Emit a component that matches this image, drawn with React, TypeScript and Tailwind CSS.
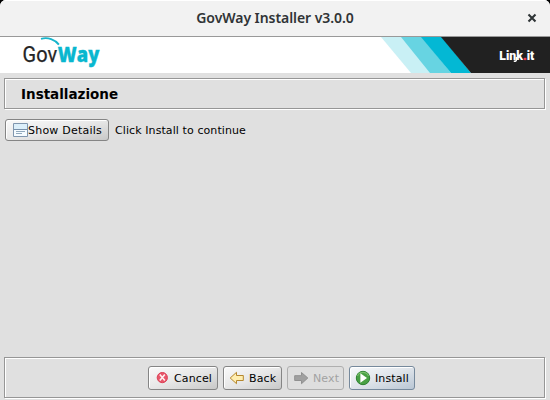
import type { ReactNode } from "react";

const etched =
  "border border-[#969696] shadow-[inset_1px_1px_0_#fff,1px_1px_0_#fff]";

function GovWayLogo() {
  return (
    <svg className="ml-[20px] h-[36px] w-[90px]" viewBox="20 37 90 36">
      <path d="M41 38.8 C48 36.8 55 39.5 58.9 44.6" fill="none" stroke="#18b5cb" strokeWidth="1.9" />
      <text x="22.6" y="62.3" fontSize="21.5" fontFamily="'Roboto', sans-serif" fill="#252525" stroke="#252525" strokeWidth=".25" textLength="34.5" lengthAdjust="spacingAndGlyphs">Gov</text>
      <text x="57.8" y="62" fontSize="21.5" fontFamily="'Open Sans', sans-serif" fontWeight="800" fill="#09b7cf" stroke="#09b7cf" strokeWidth=".4" textLength="41.5" lengthAdjust="spacingAndGlyphs">Way</text>
    </svg>
  );
}

function BannerArt() {
  return (
    <svg className="h-[36px] w-[170px]" viewBox="380 37 170 36">
      <path d="M381 37h21l29 36h-20z" fill="#c9f0f5" />
      <path d="M401 37h21l29 36h-21z" fill="#67d4e2" />
      <path d="M421 37h21l29 36h-20z" fill="#03b8d4" />
      <path d="M441 37h109v36h-79z" fill="#212121" />
      <text x="499.3" y="59.5" fontFamily="'Roboto', sans-serif" fontWeight="900" fontSize="12.5" fill="#fff" textLength="35" lengthAdjust="spacingAndGlyphs">
        Link<tspan fill="#ff4058" stroke="#ff4058" strokeWidth=".4">.</tspan>it
      </text>
      <path d="M516.4 57v2.8q0 1.7-2.6 1.5" fill="none" stroke="#fff" strokeWidth="1.5" />
    </svg>
  );
}

function DetailsIcon() {
  return (
    <svg className="h-[16px] w-[15px] shrink-0" viewBox="0 0 15 16">
      <path d="M.5 1.5h14v13H.5z" fill="#f5fbff" stroke="#8096ae" />
      <path d="M1 2h13v5H1z" fill="#dceffa" />
      <path d="M1 7.5h13" stroke="#7890aa" />
      <path d="M3 9.5h9M3 11.5h6" stroke="#91a9bd" />
    </svg>
  );
}

function CancelIcon() {
  return (
    <svg className="h-[16px] w-[16px] shrink-0" viewBox="0 0 16 16">
      <circle cx="8.3" cy="7.6" r="5.1" fill="#e8566a" stroke="#dc3f55" />
      <path d="m5.8 4.6 5 6M10.8 4.6l-5 6" stroke="#fff0f1" strokeWidth="1.6" />
    </svg>
  );
}

function BackIcon() {
  return (
    <svg className="h-[16px] w-[16px] shrink-0" viewBox="0 0 16 16">
      <path d="M1.2 8 7.5 2.3v3.2h6.8v5H7.5v3.2z" fill="#ffeeb0" stroke="#b5872f" strokeLinejoin="round" />
    </svg>
  );
}

function NextIcon() {
  return (
    <svg className="h-[16px] w-[16px] shrink-0" viewBox="0 0 16 16">
      <path d="M14.8 8 8.5 2.5v3.2H1.7v4.8h6.8v3.2z" fill="#a0a0a0" stroke="#909090" strokeLinejoin="round" />
    </svg>
  );
}

function InstallIcon() {
  return (
    <svg className="h-[16px] w-[16px] shrink-0" viewBox="0 0 16 16">
      <circle cx="8" cy="8" r="6.7" fill="#48a044" stroke="#2d8032" />
      <path d="M2.5 6a6 6 0 0 1 11 0" fill="none" stroke="#78bd6b" strokeWidth="1.2" />
      <path d="m5.4 3.3 6.6 4.7-6.6 4.7z" fill="#fff" />
    </svg>
  );
}

interface ActionProps {
  icon: ReactNode;
  label: string;
  size: string;
  tone: string;
  disabled?: boolean;
}

function Action({ icon, label, size, tone, disabled }: ActionProps) {
  return (
    <button
      disabled={disabled}
      className={`flex h-[24px] shrink-0 items-center gap-[4px] rounded-[3px] border pl-[5px] ${size} ${tone}`}
    >
      {icon}
      <span className="pt-[2px] leading-none tracking-[0.12px] whitespace-nowrap">{label}</span>
    </button>
  );
}

const normalTone =
  "border-[#858585] bg-linear-to-br from-[#fafafa] via-[#e7e7e7] to-[#c8c8c8] shadow-[inset_1px_1px_0_#fff]";

export default function App() {
  return (
    <div className="h-[400px] w-[550px] overflow-hidden bg-black font-['DejaVu_Sans',sans-serif] text-[11px] text-black">
      <div className="flex h-full flex-col overflow-hidden rounded-t-[6px] bg-[#e0e0e0]">
        <header className="flex h-[37px] shrink-0 items-center border-b border-[#999] bg-[#f2f2f2] pl-[23px] shadow-[inset_0_1px_0_#fff]">
          <h1 className="flex-1 text-center font-['Noto_Sans','Open_Sans',sans-serif] text-[14px] leading-none font-semibold tracking-[-0.06px] text-[#303436]">
            GovWay Installer v3.0.0
          </h1>
          <button className="mr-[13px] flex size-[10px] items-center justify-center" aria-label="Close">
            <svg className="size-[10px]" viewBox="0 0 10 10">
              <path d="m1.5 1.5 7 7m0-7-7 7" stroke="#2e3436" strokeWidth="2.1" />
            </svg>
          </button>
        </header>

        <div className="flex h-[36px] shrink-0 justify-between bg-white">
          <GovWayLogo />
          <BannerArt />
        </div>

        <section className={`mt-[5px] mr-[5px] ml-[4px] flex h-[31px] shrink-0 items-center pl-[16px] ${etched}`}>
          <h2 className="pt-[2px] text-[13.5px] leading-none font-bold">Installazione</h2>
        </section>

        <main className="flex flex-1 items-start pt-[10px] pl-[5px]">
          <button className={`flex h-[22px] w-[104px] shrink-0 items-center rounded-[3px] border pl-[7px] ${normalTone}`}>
            <DetailsIcon />
            <span className="leading-none tracking-[0.22px] whitespace-nowrap">Show Details</span>
          </button>
          <p className="ml-[6px] pt-[1px] leading-[22px] tracking-[0.09px]">Click Install to continue</p>
        </main>

        <footer className={`mr-[5px] mb-[2px] ml-[4px] flex h-[41px] shrink-0 items-center gap-[5px] pl-[143px] ${etched}`}>
          <Action icon={<CancelIcon />} label="Cancel" size="w-[70px]" tone={normalTone} />
          <Action icon={<BackIcon />} label="Back" size="w-[59px]" tone={normalTone} />
          <Action
            icon={<NextIcon />}
            label="Next"
            size="w-[57px]"
            tone="border-[#afafaf] bg-[#dedede] text-[#a2a2a2]"
            disabled
          />
          <Action
            icon={<InstallIcon />}
            label="Install"
            size="w-[66px]"
            tone="border-[#76899c] bg-linear-to-br from-[#f8fafc] via-[#dfe4ea] to-[#b9c6d4] shadow-[inset_1px_1px_0_#fff]"
          />
        </footer>
      </div>
    </div>
  );
}
